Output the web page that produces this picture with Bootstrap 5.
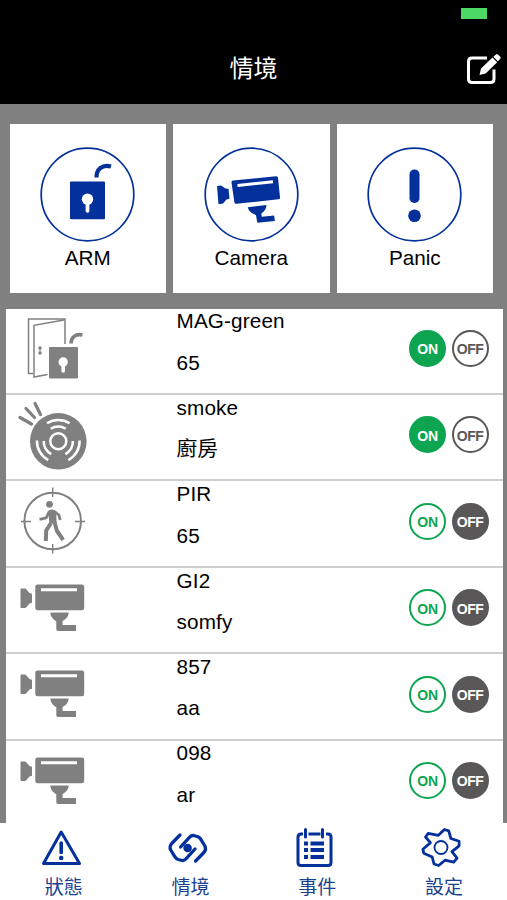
<!DOCTYPE html>
<html lang="zh-Hant">
<head>
<meta charset="utf-8">
<meta name="viewport" content="width=device-width, initial-scale=1">
<title>情境</title>
<link rel="stylesheet" href="https://cdn.jsdelivr.net/npm/bootstrap@5.3.0/dist/css/bootstrap.min.css">
<style>
:root{--navy:#03309a;--ash:#808080}
body{font-family:"Liberation Sans","Noto Sans CJK TC",sans-serif;color:#000;background:#808080}
.screen{width:507px;height:900px}
.topbar{height:103.5px;background:#000;color:#fff}
.battery{width:26px;height:10.5px;margin:8px 20px 0 0;background:#4cd964}
.titlebar{grid-template-columns:1fr auto 1fr;height:44px;margin-top:28px}
.titlebar h1{font-size:24px;line-height:40px;padding-bottom:4px;font-family:"Noto Sans CJK TC",sans-serif;font-weight:400}
.scenes{padding:20.5px 14px 0 9.5px;gap:7px}
.scene{height:169px;background:#fff;font-size:20.7px;line-height:24px;padding-top:23px}
.scene svg{width:95px;height:95px;color:var(--navy)}
.scene span{margin-top:3.7px}
.devices{margin:15.7px 4.5px 0 6px;height:514px;background:#fff}
.device{height:86.4px;border-bottom:2px solid #cfcfcf}
.device>svg{width:90px;height:86px;color:var(--ash)}
.label-pair{margin-left:80.5px;padding-top:.7px;font-size:20.7px;letter-spacing:.15px;line-height:24px;gap:17.5px}
.switches{padding:21.3px 13.5px 0 0;gap:6px}
.pill{width:37px;height:37px;border:2px solid;font-size:14px;letter-spacing:-.2px;line-height:1;font-weight:700;padding-top:2px;background:#fff}
.pill-on{color:#0da550}.pill-off{color:#595757;letter-spacing:-.5px;padding-right:1px}
.pill-on.picked{background:#0da550;border-color:#0da550;color:#fff}
.pill-off.picked{background:#595757;border-color:#595757;color:#fff}
.tabs{background:#fff;color:var(--navy)}
.tabs a{color:#18418f;font-family:"Noto Sans CJK TC",sans-serif;font-size:19px;line-height:24px}
.tabs svg{width:44px;height:44px;margin:3px 5px 0 0;color:var(--navy)}
.tabs span{margin:4px 0 0 1px}
</style>
<script src="https://cdn.jsdelivr.net/npm/bootstrap@5.3.0/dist/js/bootstrap.bundle.min.js"></script>
</head>
<body>
<svg class="d-none" aria-hidden="true">
<symbol id="camera" viewBox="6 0 90 86">
<path fill="currentColor" d="M21.500 20.500h4l4 4.500 2.500.8v9l-2.500.8-4 4.400h-4q-1 0-1-1V21.500q0-1 1-1zM37.500 16.600h44.500q2.200 0 2.200 2.200v21.200q0 2.200-2.200 2.200H37.500q-2.200 0-2.200-2.200V18.800q0-2.200 2.200-2.200zM50.400 44.500h18.200c0 4-2.500 6.500-6 8.500v4H76v5.900H58q-1.700 0-1.700-1.700v-8c-3.500-2-5.900-4.700-5.900-8.700z"/>
<path fill="#fff" d="M41 20.300h36v3H41z"/>
</symbol>
<symbol id="door" viewBox="6 0 90 86">
<g fill="none" stroke="currentColor" stroke-width="1.500"><path d="M33 64.500h-4.500V10H65v25"/><path d="M47.500 65.500 34 68V16.300L64 11"/></g>
<circle cx="40" cy="39" r="1.700" fill="currentColor"/><circle cx="40" cy="44" r="1.700" fill="currentColor"/><path d="M40 38v7" stroke="currentColor"/>
<rect x="49" y="38" width="29" height="31.500" rx="1" fill="currentColor"/>
<path d="M71 34.500c0-6 4.500-10 11.500-8.500" fill="none" stroke="currentColor" stroke-width="3.600"/>
<circle cx="63.200" cy="53" r="4.700" fill="#fff"/><path d="M63.200 54v8" stroke="#fff" stroke-width="3.600" stroke-linecap="round"/>
</symbol>
<symbol id="smoke" viewBox="6 0 90 86">
<path d="m20 22.500 11.500 6.500M26 13.500l8.500 9M35 8.500l5.500 11" stroke="currentColor" stroke-width="3.200" stroke-linecap="round"/>
<circle cx="58.300" cy="46.300" r="28.300" fill="currentColor"/>
<g fill="none" stroke="#fff" stroke-width="2.500"><circle cx="58.300" cy="46.300" r="8"/>
<g id="waves"><path d="M50.800 33.800a14.500 14.500 0 0 1 15 0M47 28.200a21.300 21.300 0 0 1 22.600 0"/></g>
<use href="#waves" transform="rotate(120 58.300 46.300)"/><use href="#waves" transform="rotate(240 58.300 46.300)"/></g>
</symbol>
<symbol id="motion" viewBox="6 0 90 86">
<g fill="none" stroke="currentColor" stroke-width="2"><circle cx="52.700" cy="40" r="28.300"/><path stroke-width="1.400" d="M52.700 6.500V16M52.700 63v9.500M21 40.500h10M75 40.500h10"/></g>
<circle cx="49.500" cy="23.300" r="3.400" fill="currentColor"/>
<path fill="currentColor" d="M48 30q1.500-1.800 4-1.600 3 .2 4.200 2l.3 12h-7z"/>
<path fill="none" stroke="currentColor" stroke-width="4" stroke-linejoin="round" d="M51 42 46.200 49.500 45.800 60M54.400 40.500 57 50l6.200 8.900"/>
<path fill="none" stroke="currentColor" stroke-width="2.800" stroke-linejoin="round" d="m49 30.800-2.700 6-6.800 1.500M54.500 30.500l4.300 3.500 1.500 5"/>
</symbol>
</svg>

<div class="screen d-flex flex-column overflow-hidden">
<header class="topbar flex-shrink-0">
<div class="battery ms-auto"></div>
<div class="titlebar d-grid align-items-center">
<span></span><h1 class="m-0">情境</h1>
<svg class="ms-auto me-1" width="38" height="40" viewBox="465 48.500 38 40" fill="none"><path d="M487 57.500h-15q-3.500 0-3.500 3.500v17.500q0 3.500 3.500 3.500h18.500q3.500 0 3.500-3.500V69" stroke="#fff" stroke-width="3"/><path fill="#fff" d="m479.500 74.500 1.500-6.500 11.500-11 4.700 4.700-11.500 11.300zM493.300 56.200l2.700-2.300q1-1 2 0l2.300 2.400q1 1 0 2l-2.400 2.500z"/></svg>
</div>
</header>

<section class="scenes d-flex flex-shrink-0">
<div class="scene flex-fill w-100 d-flex flex-column align-items-center"><svg viewBox="0 0 95 95"><circle cx="47.500" cy="47.500" r="46.300" fill="none" stroke="currentColor" stroke-width="1.700"/><rect x="30" y="34.500" width="35" height="37.700" rx="1" fill="currentColor"/><path d="M56.500 30.500c-.3-8 5.500-13.500 14.500-11" fill="none" stroke="currentColor" stroke-width="4.200"/><circle cx="47.500" cy="52.200" r="5.700" fill="#fff"/><path d="M47.500 54v9.800" stroke="#fff" stroke-width="3.800" stroke-linecap="round"/></svg><span>ARM</span></div>
<div class="scene flex-fill w-100 d-flex flex-column align-items-center"><svg viewBox="0 0 95 95"><circle cx="47.500" cy="47.500" r="46.300" fill="none" stroke="currentColor" stroke-width="1.700"/><path fill="currentColor" d="m13 39 4-.500 4.500 3 3 .3 1 10-3 .8-3.500 4-4.500.6zM29 33.500l43-4.300q1.800-.2 2 1.600l2 19.500q.2 1.800-1.600 2l-42 4.500q-1.800.2-2-1.600l-2.900-19.700q-.2-1.800 1.500-2zM43.800 60.300l18.500-2.300q.5 4.500-5 8.500l.5 3.300 12.300-1.300.8 5.500-17.500 1.700-1.500-7.700q-7.200-2.500-8.100-7.700z"/><path d="m33.500 38.500 35.500-3.800" stroke="#fff" stroke-width="3"/></svg><span>Camera</span></div>
<div class="scene flex-fill w-100 d-flex flex-column align-items-center"><svg viewBox="0 0 95 95"><circle cx="47.500" cy="47.500" r="46.300" fill="none" stroke="currentColor" stroke-width="1.700"/><rect x="42.500" y="22.500" width="10" height="33.500" rx="4.800" fill="currentColor"/><circle cx="47.500" cy="68.800" r="6.300" fill="currentColor"/></svg><span>Panic</span></div>
</section>

<main class="devices flex-shrink-0 overflow-hidden">
<div class="device d-flex"><svg><use href="#door"/></svg><div class="label-pair d-flex flex-column"><span>MAG-green</span><span>65</span></div><div class="switches d-flex ms-auto"><span class="pill pill-on picked rounded-circle d-flex align-items-center justify-content-center">ON</span><span class="pill pill-off rounded-circle d-flex align-items-center justify-content-center">OFF</span></div></div>
<div class="device d-flex"><svg><use href="#smoke"/></svg><div class="label-pair d-flex flex-column"><span>smoke</span><span>廚房</span></div><div class="switches d-flex ms-auto"><span class="pill pill-on picked rounded-circle d-flex align-items-center justify-content-center">ON</span><span class="pill pill-off rounded-circle d-flex align-items-center justify-content-center">OFF</span></div></div>
<div class="device d-flex"><svg><use href="#motion"/></svg><div class="label-pair d-flex flex-column"><span>PIR</span><span>65</span></div><div class="switches d-flex ms-auto"><span class="pill pill-on rounded-circle d-flex align-items-center justify-content-center">ON</span><span class="pill pill-off picked rounded-circle d-flex align-items-center justify-content-center">OFF</span></div></div>
<div class="device d-flex"><svg><use href="#camera"/></svg><div class="label-pair d-flex flex-column"><span>GI2</span><span>somfy</span></div><div class="switches d-flex ms-auto"><span class="pill pill-on rounded-circle d-flex align-items-center justify-content-center">ON</span><span class="pill pill-off picked rounded-circle d-flex align-items-center justify-content-center">OFF</span></div></div>
<div class="device d-flex"><svg><use href="#camera"/></svg><div class="label-pair d-flex flex-column"><span>857</span><span>aa</span></div><div class="switches d-flex ms-auto"><span class="pill pill-on rounded-circle d-flex align-items-center justify-content-center">ON</span><span class="pill pill-off picked rounded-circle d-flex align-items-center justify-content-center">OFF</span></div></div>
<div class="device d-flex"><svg><use href="#camera"/></svg><div class="label-pair d-flex flex-column"><span>098</span><span>ar</span></div><div class="switches d-flex ms-auto"><span class="pill pill-on rounded-circle d-flex align-items-center justify-content-center">ON</span><span class="pill pill-off picked rounded-circle d-flex align-items-center justify-content-center">OFF</span></div></div>
</main>

<nav class="tabs d-flex flex-fill">
<a href="#" class="w-25 d-flex flex-column align-items-center text-decoration-none"><svg viewBox="39 826 44 44" fill="none" stroke="currentColor"><path d="M61.200 832 43.500 863.500h36z" stroke-width="3" stroke-linejoin="round"/><path d="M61.200 843v9.500" stroke-width="3.600" stroke-linecap="round"/><circle cx="61.200" cy="858" r="2.300" fill="currentColor" stroke="none"/></svg><span>狀態</span></a>
<a href="#" class="w-25 d-flex flex-column align-items-center text-decoration-none"><svg viewBox="166 826 44 44" fill="none" stroke="currentColor" stroke-width="3.300" stroke-linecap="round" stroke-linejoin="round"><path d="m180 835-8.300 8.500q-2.700 3-1 6.500l4.500 7.300q1.200 1.600 3 2.200l4 1q2 .2 3.500-1.300l9.300-10.200"/><path d="m195.600 861 8.300-8.500q2.700-3 1-6.500l-4.500-7.300q-1.200-1.600-3-2.200l-4-1q-2-.2-3.500 1.300l-9.300 10.200"/><circle cx="187.600" cy="848" r="4.300" fill="currentColor" stroke="none"/></svg><span>情境</span></a>
<a href="#" class="w-25 d-flex flex-column align-items-center text-decoration-none"><svg viewBox="292 826 44 44" fill="none" stroke="currentColor" stroke-width="3"><path d="M303 834h-2q-3 0-3 3v25.500q0 3 3 3h27q3 0 3-3V837q0-3-3-3h-2M308.500 834h12"/><path d="M305.500 829.500v7.500M322.500 829.500v7.500" stroke-linecap="round"/><path d="M304 843.500h4M304 850h4M304 857h4M310.500 843.500H324M310.500 850H324M310.500 857H324" stroke-width="4"/></svg><span>事件</span></a>
<a href="#" class="w-25 d-flex flex-column align-items-center text-decoration-none"><svg viewBox="419 826 44 44" fill="none" stroke="currentColor" stroke-width="2.800" stroke-linejoin="round"><path d="m425.500 837 2.700-3.700 10.200 2 6-5.800 4.300 1.300 2.200 7.700 8.200 2.800v4.500l-7.200 5.900 5.200 6.500-3.400 4-8.700-2-6.300 5.300-4.700-1.500-1.800-7-8.400-3.700-.9-4 7.500-6.600z"/><circle cx="441" cy="847.500" r="6.500" stroke-width="1.800"/></svg><span>設定</span></a>
</nav>
</div>
</body>
</html>
